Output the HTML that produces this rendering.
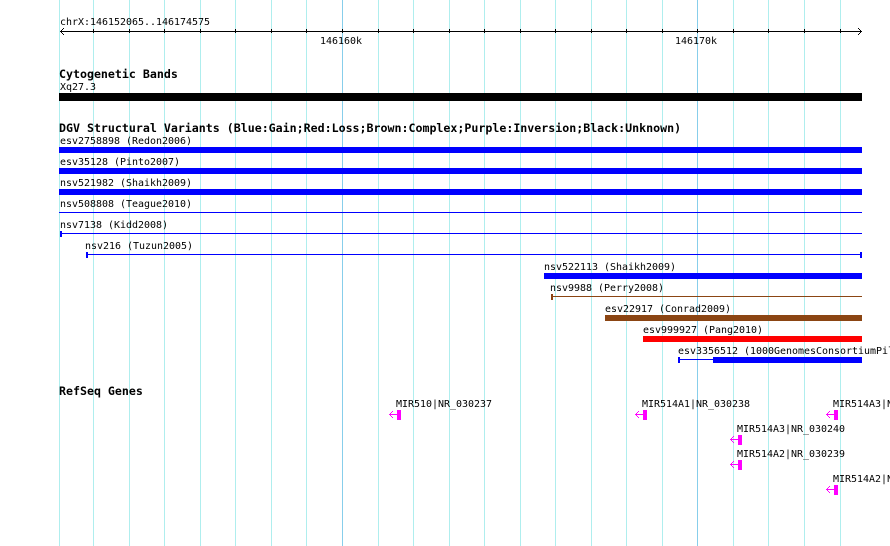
<!DOCTYPE html>
<html>
<head>
<meta charset="utf-8">
<style>
html,body{margin:0;padding:0;background:#fff;width:890px;height:546px;overflow:hidden}
svg{display:block;position:absolute;left:0;top:0}
text{font-family:"DejaVu Sans Mono","Liberation Mono",monospace;font-size:9.97px;fill:#000;white-space:pre}
text.b{font-size:11.62px;font-weight:bold}
.g{fill:#afeeee}
.m{fill:#87ceeb}
</style>
</head>
<body>
<svg width="890" height="546" viewBox="0 0 890 546" shape-rendering="crispEdges">
<rect width="890" height="546" fill="#fff"/>
<g class="g">
<rect x="59" y="0" width="1" height="546"/><rect x="93" y="0" width="1" height="546"/><rect x="129" y="0" width="1" height="546"/><rect x="164" y="0" width="1" height="546"/><rect x="200" y="0" width="1" height="546"/><rect x="235" y="0" width="1" height="546"/><rect x="271" y="0" width="1" height="546"/><rect x="306" y="0" width="1" height="546"/><rect x="378" y="0" width="1" height="546"/><rect x="413" y="0" width="1" height="546"/><rect x="449" y="0" width="1" height="546"/><rect x="484" y="0" width="1" height="546"/><rect x="520" y="0" width="1" height="546"/><rect x="555" y="0" width="1" height="546"/><rect x="591" y="0" width="1" height="546"/><rect x="626" y="0" width="1" height="546"/><rect x="662" y="0" width="1" height="546"/><rect x="733" y="0" width="1" height="546"/><rect x="768" y="0" width="1" height="546"/><rect x="804" y="0" width="1" height="546"/><rect x="840" y="0" width="1" height="546"/>
</g>
<g class="m"><rect x="342" y="0" width="1" height="546"/><rect x="697" y="0" width="1" height="546"/></g>

<!-- ruler -->
<rect x="60" y="31" width="802" height="1" fill="#000"/>
<g fill="#000">
<rect x="93" y="29" width="1" height="4"/><rect x="129" y="29" width="1" height="4"/><rect x="164" y="29" width="1" height="4"/><rect x="200" y="29" width="1" height="4"/><rect x="235" y="29" width="1" height="4"/><rect x="271" y="29" width="1" height="4"/><rect x="306" y="29" width="1" height="4"/><rect x="342" y="29" width="1" height="4"/><rect x="378" y="29" width="1" height="4"/><rect x="413" y="29" width="1" height="4"/><rect x="449" y="29" width="1" height="4"/><rect x="484" y="29" width="1" height="4"/><rect x="520" y="29" width="1" height="4"/><rect x="555" y="29" width="1" height="4"/><rect x="591" y="29" width="1" height="4"/><rect x="626" y="29" width="1" height="4"/><rect x="662" y="29" width="1" height="4"/><rect x="697" y="29" width="1" height="4"/><rect x="733" y="29" width="1" height="4"/><rect x="768" y="29" width="1" height="4"/><rect x="804" y="29" width="1" height="4"/><rect x="840" y="29" width="1" height="4"/>
<rect x="60" y="31" width="1" height="1"/><rect x="61" y="30" width="1" height="3"/><rect x="62" y="29" width="1" height="1"/><rect x="62" y="33" width="1" height="1"/><rect x="63" y="28" width="1" height="1"/><rect x="63" y="34" width="1" height="1"/>
<rect x="860" y="30" width="1" height="3"/><rect x="859" y="29" width="1" height="1"/><rect x="859" y="33" width="1" height="1"/><rect x="858" y="28" width="1" height="1"/><rect x="858" y="34" width="1" height="1"/>
</g>
<text x="60" y="25">chrX:146152065..146174575</text>
<text x="320" y="44">146160k</text>
<text x="675" y="44">146170k</text>

<!-- cytogenetic -->
<text class="b" x="59" y="78">Cytogenetic Bands</text>
<text x="60" y="90">Xq27.3</text>
<rect x="59" y="93" width="803" height="8" fill="#000"/>

<!-- DGV -->
<text class="b" x="59" y="132">DGV Structural Variants (Blue:Gain;Red:Loss;Brown:Complex;Purple:Inversion;Black:Unknown)</text>
<text x="60" y="144">esv2758898 (Redon2006)</text>
<rect x="59" y="147" width="803" height="6" fill="#0000ff"/>
<text x="60" y="165">esv35128 (Pinto2007)</text>
<rect x="59" y="168" width="803" height="6" fill="#0000ff"/>
<text x="60" y="186">nsv521982 (Shaikh2009)</text>
<rect x="59" y="189" width="803" height="6" fill="#0000ff"/>
<text x="60" y="207">nsv508808 (Teague2010)</text>
<rect x="59" y="212" width="803" height="1" fill="#0000ff"/>
<text x="60" y="228">nsv7138 (Kidd2008)</text>
<rect x="60" y="233" width="802" height="1" fill="#0000ff"/>
<rect x="60" y="231" width="2" height="6" fill="#0000ff"/>
<text x="85" y="249">nsv216 (Tuzun2005)</text>
<rect x="86" y="254" width="776" height="1" fill="#0000ff"/>
<rect x="86" y="252" width="2" height="6" fill="#0000ff"/>
<rect x="860" y="252" width="2" height="6" fill="#0000ff"/>
<text x="544" y="270">nsv522113 (Shaikh2009)</text>
<rect x="544" y="273" width="318" height="6" fill="#0000ff"/>
<text x="550" y="291">nsv9988 (Perry2008)</text>
<rect x="551" y="296" width="311" height="1" fill="#8b4513"/>
<rect x="551" y="294" width="2" height="6" fill="#8b4513"/>
<text x="605" y="312">esv22917 (Conrad2009)</text>
<rect x="605" y="315" width="257" height="6" fill="#8b4513"/>
<text x="643" y="333">esv999927 (Pang2010)</text>
<rect x="643" y="336" width="219" height="6" fill="#ff0000"/>
<text x="678" y="354">esv3356512 (1000GenomesConsortiumPilot)</text>
<rect x="678" y="359" width="35" height="1" fill="#0000ff"/>
<rect x="678" y="357" width="2" height="6" fill="#0000ff"/>
<rect x="713" y="357" width="149" height="6" fill="#0000ff"/>

<!-- RefSeq -->
<text class="b" x="59" y="395">RefSeq Genes</text>
<text x="396" y="407">MIR510|NR_030237</text>
<g fill="#ff00ff">
<rect x="397" y="410" width="4" height="10"/><rect x="389" y="414" width="8" height="1"/><rect x="390" y="413" width="1" height="3"/><rect x="391" y="412" width="1" height="1"/><rect x="391" y="416" width="1" height="1"/><rect x="392" y="411" width="1" height="1"/><rect x="392" y="417" width="1" height="1"/>
</g>
<text x="642" y="407">MIR514A1|NR_030238</text>
<g fill="#ff00ff">
<rect x="643" y="410" width="4" height="10"/><rect x="635" y="414" width="8" height="1"/><rect x="636" y="413" width="1" height="3"/><rect x="637" y="412" width="1" height="1"/><rect x="637" y="416" width="1" height="1"/><rect x="638" y="411" width="1" height="1"/><rect x="638" y="417" width="1" height="1"/>
</g>
<text x="833" y="407">MIR514A3|NR_030241</text>
<g fill="#ff00ff">
<rect x="834" y="410" width="4" height="10"/><rect x="826" y="414" width="8" height="1"/><rect x="827" y="413" width="1" height="3"/><rect x="828" y="412" width="1" height="1"/><rect x="828" y="416" width="1" height="1"/><rect x="829" y="411" width="1" height="1"/><rect x="829" y="417" width="1" height="1"/>
</g>
<text x="737" y="432">MIR514A3|NR_030240</text>
<g fill="#ff00ff">
<rect x="738" y="435" width="4" height="10"/><rect x="730" y="439" width="8" height="1"/><rect x="731" y="438" width="1" height="3"/><rect x="732" y="437" width="1" height="1"/><rect x="732" y="441" width="1" height="1"/><rect x="733" y="436" width="1" height="1"/><rect x="733" y="442" width="1" height="1"/>
</g>
<text x="737" y="457">MIR514A2|NR_030239</text>
<g fill="#ff00ff">
<rect x="738" y="460" width="4" height="10"/><rect x="730" y="464" width="8" height="1"/><rect x="731" y="463" width="1" height="3"/><rect x="732" y="462" width="1" height="1"/><rect x="732" y="466" width="1" height="1"/><rect x="733" y="461" width="1" height="1"/><rect x="733" y="467" width="1" height="1"/>
</g>
<text x="833" y="482">MIR514A2|NR_030239</text>
<g fill="#ff00ff">
<rect x="834" y="485" width="4" height="10"/><rect x="826" y="489" width="8" height="1"/><rect x="827" y="488" width="1" height="3"/><rect x="828" y="487" width="1" height="1"/><rect x="828" y="491" width="1" height="1"/><rect x="829" y="486" width="1" height="1"/><rect x="829" y="492" width="1" height="1"/>
</g>
</svg>
</body>
</html>
